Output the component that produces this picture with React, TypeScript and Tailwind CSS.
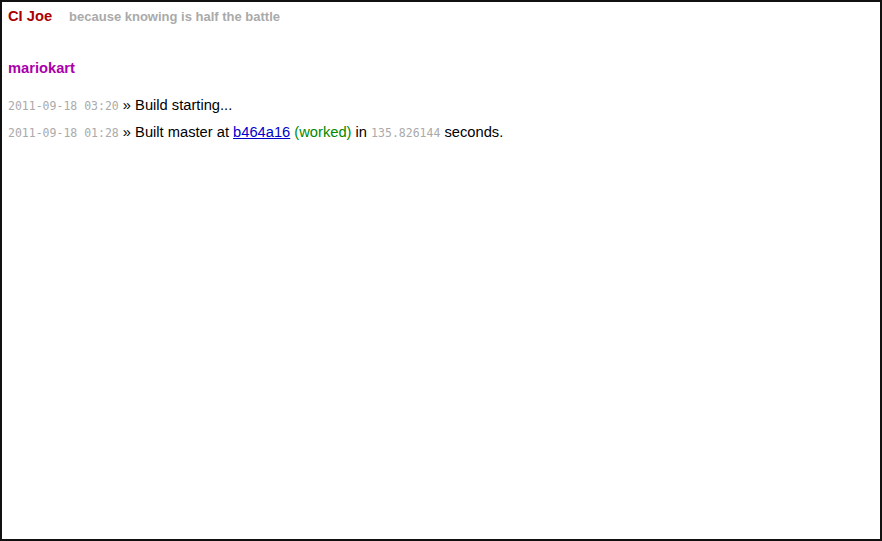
export default function App() {
  return (
    <div className="w-[882px] h-[541px] border-2 border-[#111] bg-white font-['Liberation_Sans',Helvetica,Arial,sans-serif] text-[14.7px] text-black">
      <div className="px-[6px] pt-[5px]">
        <div className="flex items-baseline">
          <h1 className="font-bold text-[14.7px] text-[#aa0000] leading-[18px]">CI Joe</h1>
          <span className="ml-[17px] font-bold text-[13px] text-[#aaaaaa]">because knowing is half the battle</span>
        </div>
        <h2 className="mt-[32px] font-bold text-[14.7px] text-[#aa00aa] leading-[18px]">mariokart</h2>
        <ul className="mt-[19px] flex flex-col gap-[8px]">
          <li className="leading-[18px]">
            <span className="font-['DejaVu_Sans_Mono',monospace] text-[11.5px] text-[#aaaaaa]">2011-09-18 03:20</span> » Build starting...
          </li>
          <li className="leading-[18px]">
            <span className="font-['DejaVu_Sans_Mono',monospace] text-[11.5px] text-[#aaaaaa]">2011-09-18 01:28</span> » Built master at{" "}
            <a href="#" className="text-[#0000cc] underline">b464a16</a>{" "}
            <span className="text-[#008800]">(worked)</span> in{" "}
            <span className="font-['DejaVu_Sans_Mono',monospace] text-[11.5px] text-[#aaaaaa]">135.826144</span> seconds.
          </li>
        </ul>
      </div>
    </div>
  );
}
